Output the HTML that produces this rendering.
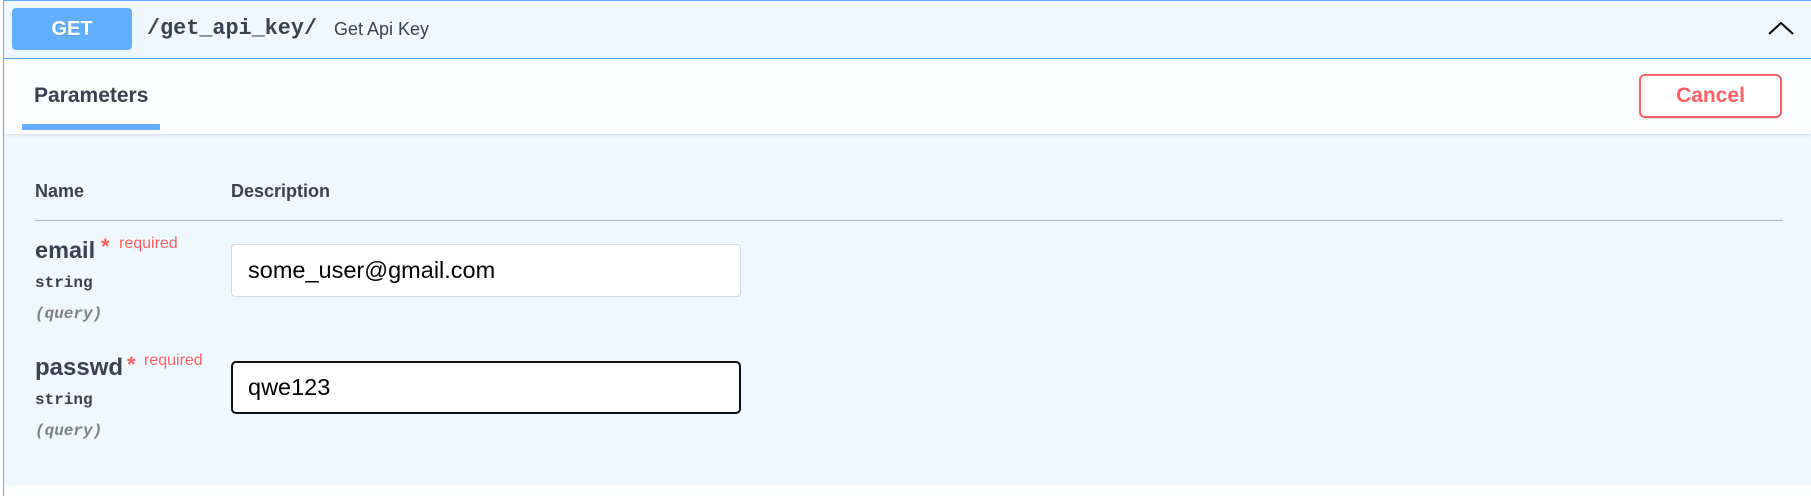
<!DOCTYPE html>
<html><head><meta charset="utf-8"><style>
*{margin:0;padding:0;box-sizing:border-box}
body{width:1811px;height:496px;background:#fff;position:relative;overflow:hidden;font-family:"Liberation Sans",Arial,sans-serif;color:#3b4151}
.a{position:absolute;white-space:nowrap}
</style></head><body>
<div class="a" style="left:3px;top:0;width:1808px;height:496px;background:#eff7ff;border-left:1px solid #61affe;border-top:1px solid #61affe"></div>
<div class="a" style="left:4px;top:486px;width:1807px;height:10px;background:#fbfdff"></div>
<!-- header -->
<div class="a" style="left:4px;top:58px;width:1807px;height:1px;background:#61affe"></div>
<div class="a" style="left:12px;top:8px;width:120px;height:42px;background:#61affe;border-radius:4px;color:#fff;font-weight:bold;font-size:20px;line-height:42px;text-align:center;text-shadow:0 1px 0 rgba(0,0,0,.1)">GET</div>
<div class="a" style="left:147px;top:15px;font-family:'Liberation Mono',monospace;font-weight:bold;font-size:21.8px;line-height:28px;color:#3b4151">/get_api_key/</div>
<div class="a" style="left:334px;top:17px;font-size:18px;line-height:24px;color:#3b4151">Get Api Key</div>
<svg class="a" style="left:1766px;top:19px" width="32" height="20" viewBox="0 0 32 20"><path d="M3 15 L15 4 L27 15" fill="none" stroke="#000" stroke-width="2"/></svg>
<!-- tab -->
<div class="a" style="left:4px;top:59px;width:1807px;height:75px;background:#fcfdff;box-shadow:0 1px 3px rgba(0,0,0,.12)"></div>
<div class="a" style="left:34px;top:83px;font-weight:bold;font-size:21px;line-height:26px">Parameters</div>
<div class="a" style="left:22px;top:124px;width:138px;height:6px;background:#61affe"></div>
<div class="a" style="left:1639px;top:74px;width:143px;height:44px;border:2.5px solid #ff6060;border-radius:6px;color:#ff6060;font-weight:bold;font-size:21px;line-height:39px;text-align:center;background:#fff;box-shadow:0 1px 2px rgba(0,0,0,.1)">Cancel</div>
<!-- table -->
<div class="a" style="left:35px;top:180px;font-weight:bold;font-size:18px;line-height:22px">Name</div>
<div class="a" style="left:231px;top:180px;font-weight:bold;font-size:18px;line-height:22px">Description</div>
<div class="a" style="left:35px;top:220px;width:1748px;height:1px;background:#b0b8c4"></div>

<div class="a" style="left:35px;top:236px;font-weight:bold;font-size:23.5px;line-height:28px">email</div>
<div class="a" style="left:101px;top:237px;color:#ff6060;font-weight:bold;font-size:22px;line-height:20px">*</div>
<div class="a" style="left:119px;top:235px;color:#ff6060;font-size:16px;line-height:18px">required</div>
<div class="a" style="left:35px;top:273px;font-family:'Liberation Mono',monospace;font-weight:bold;font-size:16px;line-height:20px">string</div>
<div class="a" style="left:35px;top:304px;font-family:'Liberation Mono',monospace;font-style:italic;font-weight:bold;font-size:16px;line-height:20px;color:#808080">(query)</div>
<div class="a" style="left:231px;top:244px;width:510px;height:53px;background:#fff;border:1px solid #d9d9d9;border-radius:4px;font-size:23.5px;line-height:51px;padding-left:16px;color:#000">some_user@gmail.com</div>

<div class="a" style="left:35px;top:354px;font-weight:bold;font-size:24px;line-height:28px">passwd</div>
<div class="a" style="left:127px;top:355px;color:#ff6060;font-weight:bold;font-size:22px;line-height:20px">*</div>
<div class="a" style="left:144px;top:352px;color:#ff6060;font-size:16px;line-height:18px">required</div>
<div class="a" style="left:35px;top:390px;font-family:'Liberation Mono',monospace;font-weight:bold;font-size:16px;line-height:20px">string</div>
<div class="a" style="left:35px;top:421px;font-family:'Liberation Mono',monospace;font-style:italic;font-weight:bold;font-size:16px;line-height:20px;color:#808080">(query)</div>
<div class="a" style="left:231px;top:361px;width:510px;height:53px;background:#fff;border:2px solid #111;border-radius:5px;font-size:23.5px;line-height:49px;padding-left:15px;color:#000">qwe123</div>
</body></html>
